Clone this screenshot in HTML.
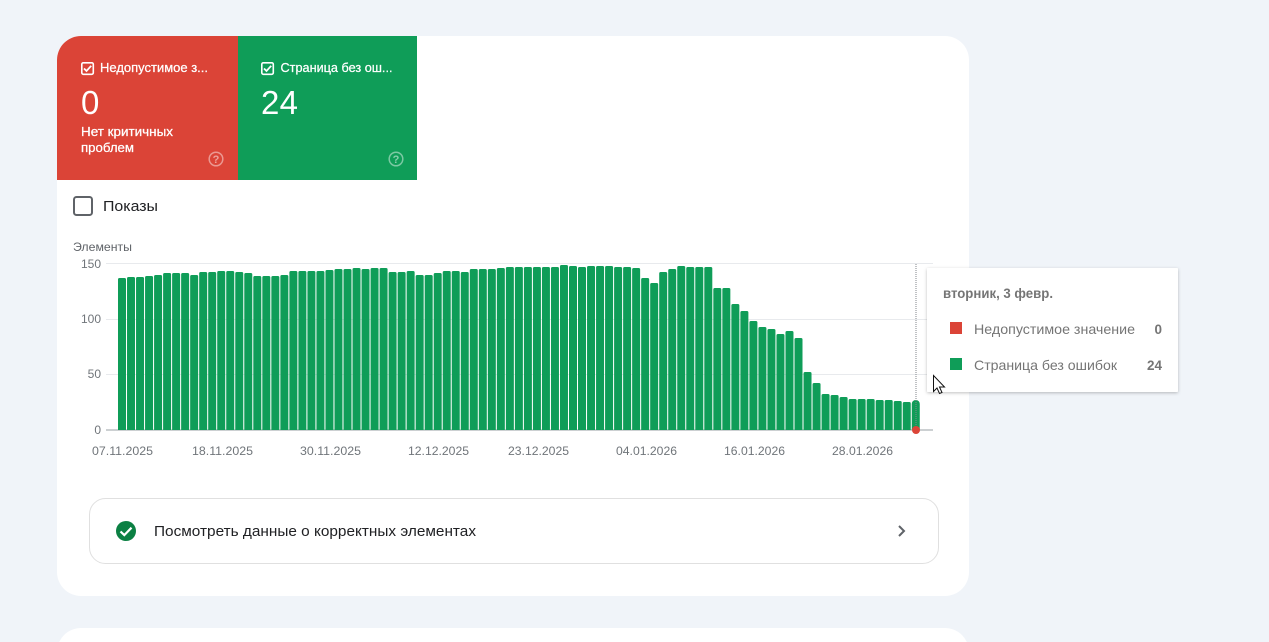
<!DOCTYPE html>
<html><head><meta charset="utf-8">
<style>
html,body{margin:0;padding:0;width:1269px;height:642px;overflow:hidden;background:#f0f4f9}
svg{display:block;position:absolute;left:0;top:0}
text{font-family:"Liberation Sans",sans-serif}
.w{fill:#fff;stroke:#fff;stroke-width:.25}
.d{font-size:12px;fill:#70757a}
</style></head>
<body>
<svg width="1269" height="642" viewBox="0 0 1269 642" xmlns="http://www.w3.org/2000/svg">
<defs>
<clipPath id="c"><rect x="100" y="250" width="840" height="180"/></clipPath>
<clipPath id="card"><rect x="57" y="36" width="912" height="560" rx="24"/></clipPath>
<filter id="sh" x="-10%" y="-10%" width="120%" height="125%"><feDropShadow dx="0" dy="1" stdDeviation="1.5" flood-color="#000" flood-opacity=".25"/></filter>
</defs>
<rect width="1269" height="642" fill="#f0f4f9"/>
<rect x="57" y="36" width="912" height="560" rx="24" fill="#fff"/>
<path d="M59.2 642A24 24 0 0 1 81 628H945A24 24 0 0 1 966.8 642Z" fill="#fff"/>
<g clip-path="url(#card)">
<rect x="57" y="36" width="181" height="144" fill="#db4437"/>
<rect x="238" y="36" width="179" height="144" fill="#0f9d58"/>
</g>
<rect x="81.8" y="62.8" width="11.5" height="11.5" rx="1.5" fill="none" stroke="#fff" stroke-width="1.6"/>
<path d="M84 68.5l2.5 2.5 4.7-5.2" fill="none" stroke="#fff" stroke-width="1.8"/>
<text class="w" x="100" y="72" font-size="13" textLength="108" lengthAdjust="spacingAndGlyphs">Недопустимое з...</text>
<text x="81" y="114" font-size="33" fill="#fff">0</text>
<text class="w" x="81" y="136" font-size="13" textLength="92" lengthAdjust="spacingAndGlyphs">Нет критичных</text>
<text class="w" x="81" y="152" font-size="13" textLength="53" lengthAdjust="spacingAndGlyphs">проблем</text>
<circle cx="216" cy="159" r="6.8" fill="none" stroke="#fff" stroke-opacity=".45" stroke-width="1.5"/>
<text x="216" y="163" font-size="11" font-weight="700" fill="#fff" fill-opacity=".5" text-anchor="middle">?</text>
<rect x="261.8" y="62.8" width="11.5" height="11.5" rx="1.5" fill="none" stroke="#fff" stroke-width="1.6"/>
<path d="M264 68.5l2.5 2.5 4.7-5.2" fill="none" stroke="#fff" stroke-width="1.8"/>
<text class="w" x="280.5" y="72" font-size="13" textLength="112" lengthAdjust="spacingAndGlyphs">Страница без ош...</text>
<text x="261" y="114" font-size="33" fill="#fff" textLength="37">24</text>
<circle cx="396" cy="159" r="6.8" fill="none" stroke="#fff" stroke-opacity=".45" stroke-width="1.5"/>
<text x="396" y="163" font-size="11" font-weight="700" fill="#fff" fill-opacity=".5" text-anchor="middle">?</text>
<rect x="74" y="197" width="18" height="18" rx="2.5" fill="#fff" stroke="#5f6368" stroke-width="2"/>
<text x="103" y="211" font-size="15" fill="#202124" textLength="55" lengthAdjust="spacingAndGlyphs">Показы</text>
<text x="73" y="251" font-size="12" fill="#5f6368" textLength="59" lengthAdjust="spacingAndGlyphs">Элементы</text>
<g font-size="12" fill="#70757a" text-anchor="end">
<text x="101" y="268">150</text><text x="101" y="323">100</text><text x="101" y="378">50</text><text x="101" y="434">0</text>
</g>
<path d="M106 263.5H933M106 319.5H933M106 374.5H933" stroke="#e8eaed" stroke-width="1"/>
<path d="M106 430H933" stroke="#9aa0a6" stroke-width="1"/>
<path clip-path="url(#c)" fill="#0f9d58" stroke="#0f9d58" stroke-width="3" stroke-linejoin="round" d="M119.5 433V279.5h5V433zM128.52 433V278.5h5V433zM137.54 433V278.5h5V433zM146.56 433V277.5h5V433zM155.58 433V276.5h5V433zM164.6 433V274.5h5V433zM173.62 433V274.5h5V433zM182.64 433V274.5h5V433zM191.66 433V276.5h5V433zM200.68 433V273.5h5V433zM209.7 433V273.5h5V433zM218.72 433V272.5h5V433zM227.74 433V272.5h5V433zM236.76 433V273.5h5V433zM245.78 433V274.5h5V433zM254.8 433V277.5h5V433zM263.82 433V277.5h5V433zM272.84 433V277.5h5V433zM281.86 433V276.5h5V433zM290.88 433V272.5h5V433zM299.9 433V272.5h5V433zM308.92 433V272.5h5V433zM317.94 433V272.5h5V433zM326.96 433V271.5h5V433zM335.98 433V270.5h5V433zM345 433V270.5h5V433zM354.02 433V269.5h5V433zM363.04 433V270.5h5V433zM372.06 433V269.5h5V433zM381.08 433V269.5h5V433zM390.1 433V273.5h5V433zM399.12 433V273.5h5V433zM408.14 433V272.5h5V433zM417.16 433V276.5h5V433zM426.18 433V276.5h5V433zM435.2 433V274.5h5V433zM444.22 433V272.5h5V433zM453.24 433V272.5h5V433zM462.26 433V273.5h5V433zM471.28 433V270.5h5V433zM480.3 433V270.5h5V433zM489.32 433V270.5h5V433zM498.34 433V269.5h5V433zM507.36 433V268.5h5V433zM516.38 433V268.5h5V433zM525.4 433V268.5h5V433zM534.42 433V268.5h5V433zM543.44 433V268.5h5V433zM552.46 433V268.5h5V433zM561.48 433V266.5h5V433zM570.5 433V267.5h5V433zM579.52 433V268.5h5V433zM588.54 433V267.5h5V433zM597.56 433V267.5h5V433zM606.58 433V267.5h5V433zM615.6 433V268.5h5V433zM624.62 433V268.5h5V433zM633.64 433V269.5h5V433zM642.66 433V279.5h5V433zM651.68 433V284.5h5V433zM660.7 433V273.5h5V433zM669.72 433V270.5h5V433zM678.74 433V267.5h5V433zM687.76 433V268.5h5V433zM696.78 433V268.5h5V433zM705.8 433V268.5h5V433zM714.82 433V289.5h5V433zM723.84 433V289.5h5V433zM732.86 433V305.5h5V433zM741.88 433V312.5h5V433zM750.9 433V322.5h5V433zM759.92 433V328.5h5V433zM768.94 433V330.5h5V433zM777.96 433V335.5h5V433zM786.98 433V332.5h5V433zM796 433V339.5h5V433zM805.02 433V373.5h5V433zM814.04 433V384.5h5V433zM823.06 433V395.5h5V433zM832.08 433V396.5h5V433zM841.1 433V398.5h5V433zM850.12 433V400.5h5V433zM859.14 433V400.5h5V433zM868.16 433V400.5h5V433zM877.18 433V401.5h5V433zM886.2 433V401.5h5V433zM895.22 433V402.5h5V433zM904.24 433V403.5h5V433z"/>
<rect clip-path="url(#c)" x="911.76" y="400" width="8" height="34" rx="4" fill="#0f9d58"/>
<path d="M916 264V430" stroke="#80868b" stroke-width="1" stroke-dasharray="1 1"/>
<circle cx="916" cy="430" r="4" fill="#db4437"/>
<text class="d" x="92" y="455" textLength="61" lengthAdjust="spacingAndGlyphs">07.11.2025</text>
<text class="d" x="192" y="455" textLength="61" lengthAdjust="spacingAndGlyphs">18.11.2025</text>
<text class="d" x="300" y="455" textLength="61" lengthAdjust="spacingAndGlyphs">30.11.2025</text>
<text class="d" x="408" y="455" textLength="61" lengthAdjust="spacingAndGlyphs">12.12.2025</text>
<text class="d" x="508" y="455" textLength="61" lengthAdjust="spacingAndGlyphs">23.12.2025</text>
<text class="d" x="616" y="455" textLength="61" lengthAdjust="spacingAndGlyphs">04.01.2026</text>
<text class="d" x="724" y="455" textLength="61" lengthAdjust="spacingAndGlyphs">16.01.2026</text>
<text class="d" x="832" y="455" textLength="61" lengthAdjust="spacingAndGlyphs">28.01.2026</text>
<rect x="927" y="268" width="251" height="124" rx="1" fill="#fff" filter="url(#sh)"/>
<text x="943" y="298" font-size="13.5" font-weight="700" fill="#757575" textLength="110" lengthAdjust="spacingAndGlyphs">вторник, 3 февр.</text>
<rect x="950" y="322" width="12" height="12" fill="#db4437"/>
<text x="974" y="334" font-size="14" fill="#757575" textLength="161" lengthAdjust="spacingAndGlyphs">Недопустимое значение</text>
<text x="1162" y="334" font-size="13.5" font-weight="700" fill="#757575" text-anchor="end">0</text>
<rect x="950" y="358" width="12" height="12" fill="#0f9d58"/>
<text x="974" y="370" font-size="14" fill="#757575" textLength="143" lengthAdjust="spacingAndGlyphs">Страница без ошибок</text>
<text x="1162" y="370" font-size="13.5" font-weight="700" fill="#757575" text-anchor="end">24</text>
<path d="M933.5 375.5V391.5L937 388L939.5 393.5L942 392.5L939.5 387H944.5Z" fill="#fff" stroke="#111" stroke-width="1"/>
<rect x="89.5" y="498.5" width="849" height="65" rx="16" fill="#fff" stroke="#e0e0e0" stroke-width="1"/>
<circle cx="126" cy="531" r="10" fill="#0b8043"/>
<path d="M120.5 531.5l3.8 3.6 7.2-7.4" fill="none" stroke="#fff" stroke-width="2.2"/>
<text x="154" y="536" font-size="14.5" fill="#202124" textLength="322" lengthAdjust="spacingAndGlyphs">Посмотреть данные о корректных элементах</text>
<path d="M899 526l5 5-5 5" fill="none" stroke="#5f6368" stroke-width="2"/>
</svg>
</body></html>
